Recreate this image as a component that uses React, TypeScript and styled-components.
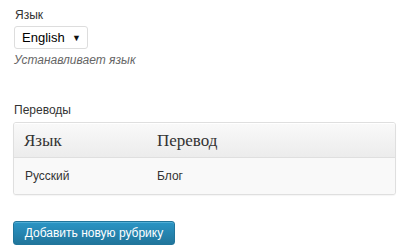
import styled, { createGlobalStyle } from 'styled-components';

const GlobalStyle = createGlobalStyle`
  html, body {
    margin: 0;
    padding: 0;
    background: #ffffff;
  }
  body {
    font-family: "Liberation Sans", Arial, sans-serif;
    color: #333333;
  }
`;

const rows = [{ lang: 'Русский', title: 'Блог' }];

function App() {
  return (
    <Page>
      <GlobalStyle />
      <Field>
        <Label>Язык</Label>
        <SelectBox>
          <span>English</span>
          <Arrow>▼</Arrow>
        </SelectBox>
        <Hint>Устанавливает язык</Hint>
      </Field>

      <Section>
        <Label>Переводы</Label>
        <Table>
          <thead>
            <tr>
              <HeadCell>Язык</HeadCell>
              <HeadCell>Перевод</HeadCell>
            </tr>
          </thead>
          <tbody>
            {rows.map((row) => (
              <tr key={row.lang}>
                <Cell>{row.lang}</Cell>
                <Cell>{row.title}</Cell>
              </tr>
            ))}
          </tbody>
        </Table>
      </Section>

      <PrimaryButton type="button">Добавить новую рубрику</PrimaryButton>
    </Page>
  );
}

export default App;

const Page = styled.div`
  width: 402px;
  height: 252px;
  padding: 8px 6px 0 13px;
  box-sizing: border-box;
  display: flex;
  flex-direction: column;
  align-items: flex-start;
`;

const Field = styled.div`
  display: flex;
  flex-direction: column;
  align-items: flex-start;
  padding-left: 1px;
`;

const Section = styled.div`
  margin-top: 35px;
  width: 100%;
  display: flex;
  flex-direction: column;
`;

const Label = styled.div`
  font-size: 12px;
  line-height: 15px;
  color: #333333;
  padding-left: 1px;
`;

const SelectBox = styled.div`
  margin-top: 3px;
  width: 74px;
  height: 23px;
  box-sizing: border-box;
  border: 1px solid #dddddd;
  border-radius: 3px;
  background: #ffffff;
  display: flex;
  align-items: center;
  justify-content: space-between;
  padding: 0 6px 0 7px;
  font-size: 13px;
  color: #000000;
`;

const Arrow = styled.span`
  font-size: 9px;
  color: #111111;
`;

const Hint = styled.div`
  margin-top: 4px;
  font-size: 12px;
  line-height: 15px;
  font-style: italic;
  color: #666666;
`;

const Table = styled.table`
  margin-top: 4px;
  width: 383px;
  border-collapse: separate;
  border-spacing: 0;
  border: 1px solid #dfdfdf;
  border-radius: 3px;
  background: #f9f9f9;
  box-shadow: 0 1px 1px rgba(0, 0, 0, 0.04);
  overflow: hidden;
`;

const HeadCell = styled.th`
  height: 33px;
  padding: 0 10px;
  text-align: left;
  font-family: "Liberation Serif", Georgia, serif;
  font-weight: normal;
  font-size: 17px;
  color: #333333;
  background: linear-gradient(to bottom, #f9f9f9, #ececec);
  border-top: 1px solid #ffffff;
  border-bottom: 1px solid #dfdfdf;

  &:first-child {
    width: 113px;
  }
`;

const Cell = styled.td`
  height: 36px;
  padding: 0 11px;
  font-size: 12px;
  color: #333333;
  background: #f9f9f9;

  &:last-child {
    padding-left: 10px;
  }
`;

const PrimaryButton = styled.button`
  margin-top: 26px;
  width: 162px;
  height: 24px;
  border: 1px solid #21759b;
  border-radius: 3px;
  background: linear-gradient(to bottom, #2a95c5, #21759b);
  box-shadow: inset 0 1px 0 rgba(120, 200, 230, 0.5);
  color: #ffffff;
  font-family: "Liberation Sans", Arial, sans-serif;
  font-size: 12px;
  padding: 0;
  cursor: pointer;
`;
